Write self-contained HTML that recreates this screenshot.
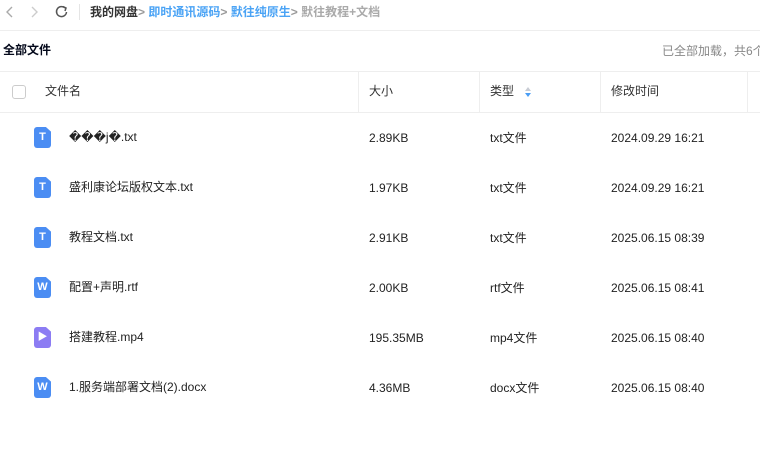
<!DOCTYPE html><html><head><meta charset="utf-8"><style>
body{margin:0;width:760px;height:474px;overflow:hidden;background:#fff;font-family:"Liberation Sans","Noto Sans CJK SC",sans-serif;color:#03081a;position:relative}
.a{position:absolute;white-space:nowrap;line-height:16px}
.ic{position:absolute;left:34px;width:17px;height:21px;border-radius:3px;clip-path:polygon(0 0,70% 0,100% 22%,100% 100%,0 100%);color:#fff;font-size:11px;font-weight:bold;text-align:center;line-height:21px}
.t{background:#4b8df3}.v{background:#8c7cf3}
.r{font-size:12px;color:#222}
</style></head><body>
<svg class="a" style="left:0;top:0" width="80" height="26"><path d="M12 7l-5 5 5 5" stroke="#aaa" stroke-width="1.4" fill="none"/><path d="M32 7l5 5-5 5" stroke="#ccc" stroke-width="1.4" fill="none"/><path d="M65 8a5 5 0 1 0 1.5 4" stroke="#555" stroke-width="1.5" fill="none"/><path d="M63 6.5l3 1.5-1 3" stroke="#555" stroke-width="1.5" fill="none"/></svg>
<div class="a" style="left:79px;top:4px;width:1px;height:16px;background:#e5e5e5"></div>
<div class="a" style="left:90px;top:4px;font-size:12px;font-weight:bold"><span style="color:#333">我的网盘</span><span style="color:#999">&gt;</span> <span style="color:#4aa3f5">即时通讯源码</span><span style="color:#999">&gt;</span> <span style="color:#4aa3f5">默往纯原生</span><span style="color:#999">&gt;</span> <span style="color:#aaa">默往教程+文档</span></div>
<div class="a" style="left:0;top:30px;width:760px;height:1px;background:#eee"></div>
<div class="a" style="left:3px;top:42px;font-size:12px;font-weight:bold">全部文件</div>
<div class="a" style="left:662px;top:43px;font-size:12px;color:#888">已全部加载，共6个</div>
<div class="a" style="left:0;top:71px;width:760px;height:1px;background:#eee"></div>
<div class="a" style="left:0;top:112px;width:760px;height:1px;background:#eee"></div>
<div class="a" style="left:358px;top:72px;width:1px;height:40px;background:#eee"></div>
<div class="a" style="left:479px;top:72px;width:1px;height:40px;background:#eee"></div>
<div class="a" style="left:600px;top:72px;width:1px;height:40px;background:#eee"></div>
<div class="a" style="left:747px;top:72px;width:1px;height:40px;background:#eee"></div>
<div class="a" style="left:12px;top:85px;width:12px;height:12px;border:1px solid #ccc;border-radius:3px"></div>
<div class="a r" style="left:45px;top:83px;color:#333">文件名</div>
<div class="a r" style="left:369px;top:83px;color:#333">大小</div>
<div class="a r" style="left:490px;top:83px;color:#333">类型</div>
<svg class="a" style="left:524px;top:86px" width="8" height="12"><path d="M1 5l3-4 3 4z" fill="#c8ccd4"/><path d="M1 7l3 4 3-4z" fill="#4a9ef5"/></svg>
<div class="a r" style="left:611px;top:83px;color:#333">修改时间</div>

<div class="ic t" style="top:127px">T</div><div class="a r" style="left:69px;top:129px">���j�.txt</div><div class="a r" style="left:369px;top:130px">2.89KB</div><div class="a r" style="left:490px;top:130px">txt文件</div><div class="a r" style="left:611px;top:130px">2024.09.29 16:21</div>
<div class="ic t" style="top:177px">T</div><div class="a r" style="left:69px;top:179px">盛利康论坛版权文本.txt</div><div class="a r" style="left:369px;top:180px">1.97KB</div><div class="a r" style="left:490px;top:180px">txt文件</div><div class="a r" style="left:611px;top:180px">2024.09.29 16:21</div>
<div class="ic t" style="top:227px">T</div><div class="a r" style="left:69px;top:229px">教程文档.txt</div><div class="a r" style="left:369px;top:230px">2.91KB</div><div class="a r" style="left:490px;top:230px">txt文件</div><div class="a r" style="left:611px;top:230px">2025.06.15 08:39</div>
<div class="ic t" style="top:277px">W</div><div class="a r" style="left:69px;top:279px">配置+声明.rtf</div><div class="a r" style="left:369px;top:280px">2.00KB</div><div class="a r" style="left:490px;top:280px">rtf文件</div><div class="a r" style="left:611px;top:280px">2025.06.15 08:41</div>
<div class="ic v" style="top:327px;font-size:10px">▶</div><div class="a r" style="left:69px;top:329px">搭建教程.mp4</div><div class="a r" style="left:369px;top:330px">195.35MB</div><div class="a r" style="left:490px;top:330px">mp4文件</div><div class="a r" style="left:611px;top:330px">2025.06.15 08:40</div>
<div class="ic t" style="top:377px">W</div><div class="a r" style="left:69px;top:379px">1.服务端部署文档(2).docx</div><div class="a r" style="left:369px;top:380px">4.36MB</div><div class="a r" style="left:490px;top:380px">docx文件</div><div class="a r" style="left:611px;top:380px">2025.06.15 08:40</div>
</body></html>
